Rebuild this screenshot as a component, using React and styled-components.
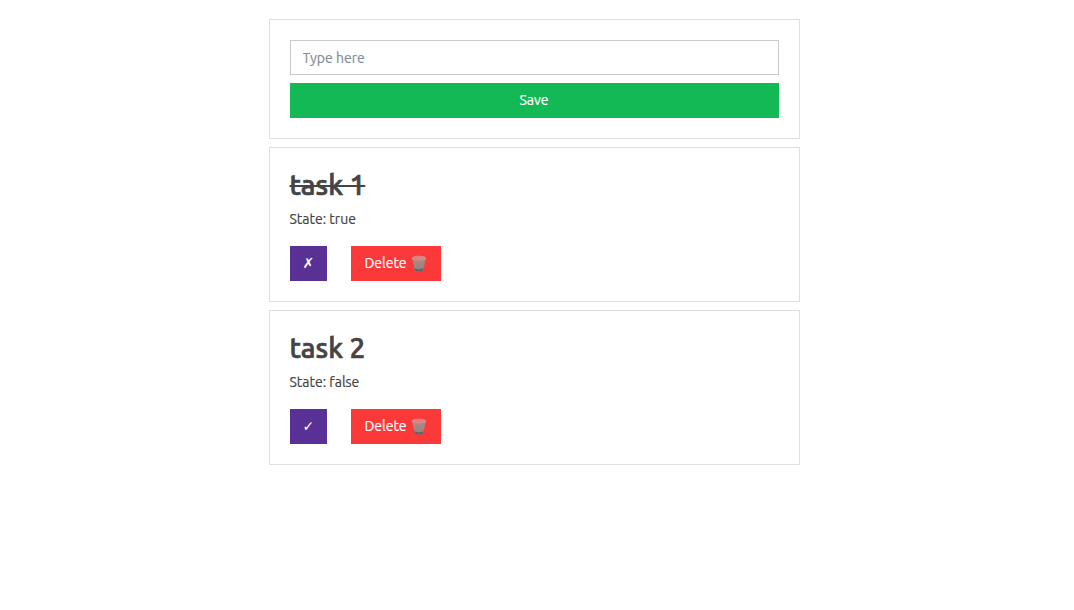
import React, { useState } from "react";
import styled, { createGlobalStyle } from "styled-components";

const GlobalStyle = createGlobalStyle`
  *, *::before, *::after { box-sizing: border-box; }
  body {
    margin: 0;
    background: #fff;
    color: #444;
    font-family: Ubuntu, "Noto Sans", "DejaVu Sans", sans-serif;
    font-size: 14px;
    line-height: 21px;
    -webkit-text-stroke: 0.2px currentColor;
  }
`;

const Page = styled.main`
  display: flex;
  flex-direction: column;
  gap: 8px;
  margin: 0 25%;
  padding: 19px 6px 19px 0;
`;

const Card = styled.section`
  padding: 20px;
  border: 1px solid rgba(0, 0, 0, 0.125);
  background: #fff;
`;

const Form = styled.form`
  display: flex;
  flex-direction: column;
  gap: 8px;
`;

const TextInput = styled.input`
  width: 100%;
  height: 35px;
  padding: 6px 12px;
  border: 1px solid #cbc8d0;
  border-radius: 0;
  background: #fff;
  color: #444;
  font: inherit;
  &::placeholder { color: #868e96; opacity: 1; }
`;

const COLORS = { success: "#13b955", info: "#593196", danger: "#fc3939" };

const Button = styled.button`
  display: inline-flex;
  align-items: center;
  justify-content: center;
  gap: 4px;
  height: 35px;
  padding: 0 13px;
  border: 0;
  background: ${({ $tone }) => COLORS[$tone]};
  color: #fff;
  font: inherit;
  cursor: pointer;
`;

const DeleteButton = styled(Button)`
  min-width: 90px;
`;

const Title = styled.h2`
  margin: 0 0 7px;
  font-size: 28px;
  font-weight: 500;
  line-height: 34px;
  -webkit-text-stroke: 0.7px currentColor;
  text-decoration: ${({ $done }) => ($done ? "line-through" : "none")};
`;

const State = styled.p`
  margin: 0 0 16px;
`;

const Actions = styled.div`
  display: flex;
  gap: 24px;
`;

const Mark = styled.span`
  width: 11px;
  font-family: "DejaVu Sans", sans-serif;
  font-size: 14px;
  -webkit-text-stroke: 0;
`;

function TrashIcon() {
  return (
    <svg width="16" height="18" viewBox="0 0 16 18" aria-hidden="true">
      <defs>
        <linearGradient id="can" x1="0" y1="0" x2="0" y2="1">
          <stop offset="0" stopColor="#d97f7c" />
          <stop offset="0.6" stopColor="#b07f7c" />
          <stop offset="1" stopColor="#7d8583" />
        </linearGradient>
        <pattern id="mesh" width="2" height="2" patternUnits="userSpaceOnUse">
          <path d="M0 0l2 2M2 0L0 2" stroke="#84908d" strokeWidth="0.4" />
        </pattern>
      </defs>
      <path d="M1.2 3L3.9 15.4Q8 17.4 12.1 15.4L14.8 3Z" fill="url(#can)" />
      <path d="M1.2 3L3.9 15.4Q8 17.4 12.1 15.4L14.8 3Z" fill="url(#mesh)" />
      <path d="M3.6 13.6Q8 15.2 12.4 13.6L12.1 15.4Q8 17.4 3.9 15.4Z" fill="#5c6664" />
      <ellipse cx="8" cy="3.1" rx="6.8" ry="1.9" fill="#f27b78" stroke="#b3a09d" strokeWidth="0.8" />
    </svg>
  );
}

function Task({ task, onToggle, onDelete }) {
  return (
    <Card>
      <Title $done={task.done}>{task.name}</Title>
      <State>State: {String(task.done)}</State>
      <Actions>
        <Button
          type="button"
          $tone="info"
          aria-label={task.done ? "Mark as not done" : "Mark as done"}
          onClick={onToggle}
        >
          <Mark>{task.done ? "✗" : "✓"}</Mark>
        </Button>
        <DeleteButton type="button" $tone="danger" onClick={onDelete}>
          Delete <TrashIcon />
        </DeleteButton>
      </Actions>
    </Card>
  );
}

export default function App() {
  const [tasks, setTasks] = useState([
    { id: 1, name: "task 1", done: true },
    { id: 2, name: "task 2", done: false },
  ]);
  const [name, setName] = useState("");

  const save = (event) => {
    event.preventDefault();
    if (!name.trim()) return;
    setTasks([...tasks, { id: Date.now(), name, done: false }]);
    setName("");
  };

  return (
    <>
      <GlobalStyle />
      <Page>
        <Card>
          <Form onSubmit={save}>
            <TextInput
              type="text"
              aria-label="Task name"
              placeholder="Type here"
              value={name}
              onChange={(event) => setName(event.target.value)}
            />
            <Button type="submit" $tone="success">Save</Button>
          </Form>
        </Card>
        {tasks.map((task) => (
          <Task
            key={task.id}
            task={task}
            onToggle={() =>
              setTasks(tasks.map((t) => (t.id === task.id ? { ...t, done: !t.done } : t)))
            }
            onDelete={() => setTasks(tasks.filter((t) => t.id !== task.id))}
          />
        ))}
      </Page>
    </>
  );
}
